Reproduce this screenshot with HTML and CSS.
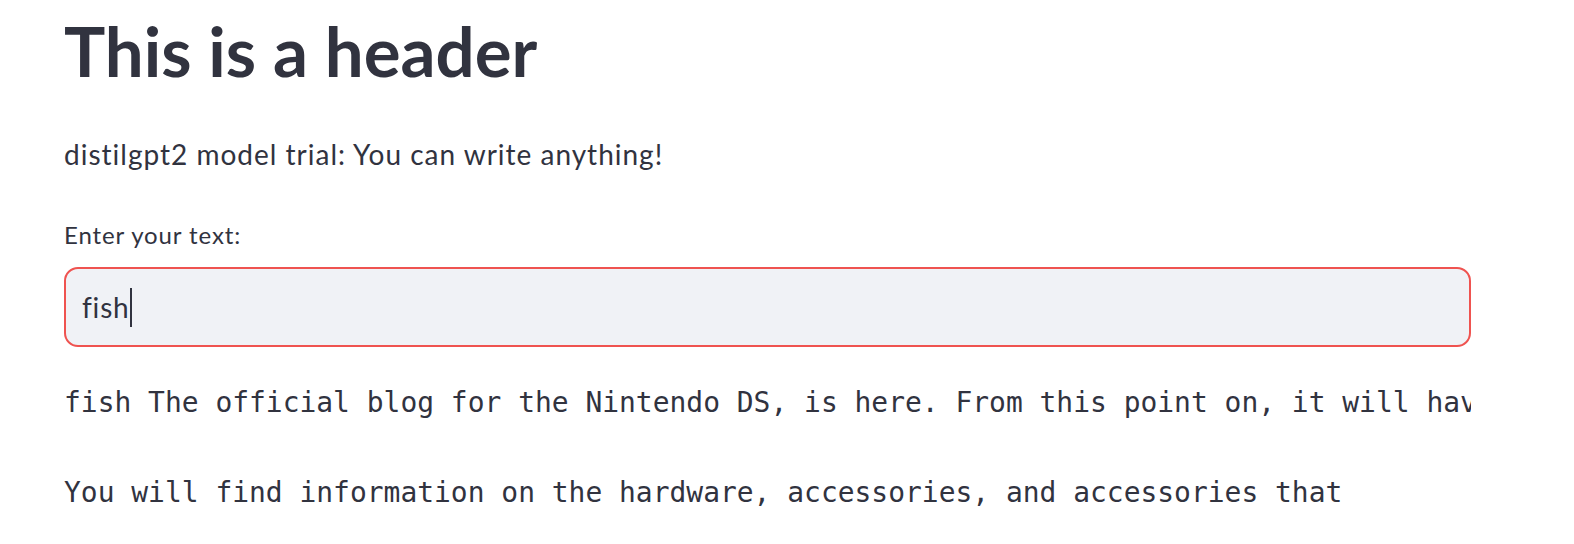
FILE: index.html
```html
<!DOCTYPE html>
<html>
<head>
<meta charset="utf-8">
<link rel="stylesheet" href="styles.css">
</head>
<body>
<main class="main">
  <h1 class="title">This is a header</h1>
  <p class="intro">distilgpt2 model trial: You can write anything!</p>
  <label class="field-label">Enter your text:</label>
  <div class="input-box"><span class="input-value">fish</span><span class="caret"></span></div>
  <pre class="output">fish The official blog for the Nintendo DS, is here. From this point on, it will have

You will find information on the hardware, accessories, and accessories that</pre>
</main>
</body>
</html>
```
FILE: styles.css
```css
html, body {
  margin: 0;
  padding: 0;
  background: #ffffff;
}
body {
  font-family: "Lato", "Noto Sans", sans-serif;
  color: #31333f;
}
.main {
  width: 1407px;
  padding: 9px 103px 0 64px;
  display: flex;
  flex-direction: column;
}
.title {
  margin: 0;
  font-size: 69px;
  line-height: 84px;
  font-weight: 700;
  height: 84px;
}
.intro {
  margin: 41px 0 0 0;
  font-size: 28px;
  letter-spacing: 1px;
  line-height: 40px;
  height: 40px;
}
.field-label {
  margin-top: 44.6px;
  font-size: 24px;
  letter-spacing: 0.9px;
  line-height: 32px;
  height: 32px;
}
.input-box {
  margin-top: 16px;
  box-sizing: border-box;
  height: 80px;
  border: 2px solid #ef5350;
  border-radius: 14px;
  background: #f0f2f6;
  padding: 0 16px;
  font-size: 28px;
  letter-spacing: 0.8px;
  line-height: 76px;
  white-space: nowrap;
}
.caret {
  display: inline-block;
  width: 2px;
  height: 39px;
  margin-left: 1px;
  background: #31333f;
  vertical-align: -9px;
}
.output {
  margin: 33px 0 0 0;
  font-family: "DejaVu Sans Mono", "Liberation Mono", monospace;
  font-size: 27.95px;
  line-height: 45px;
  white-space: pre;
  overflow: hidden;
  color: #31333f;
}
```
